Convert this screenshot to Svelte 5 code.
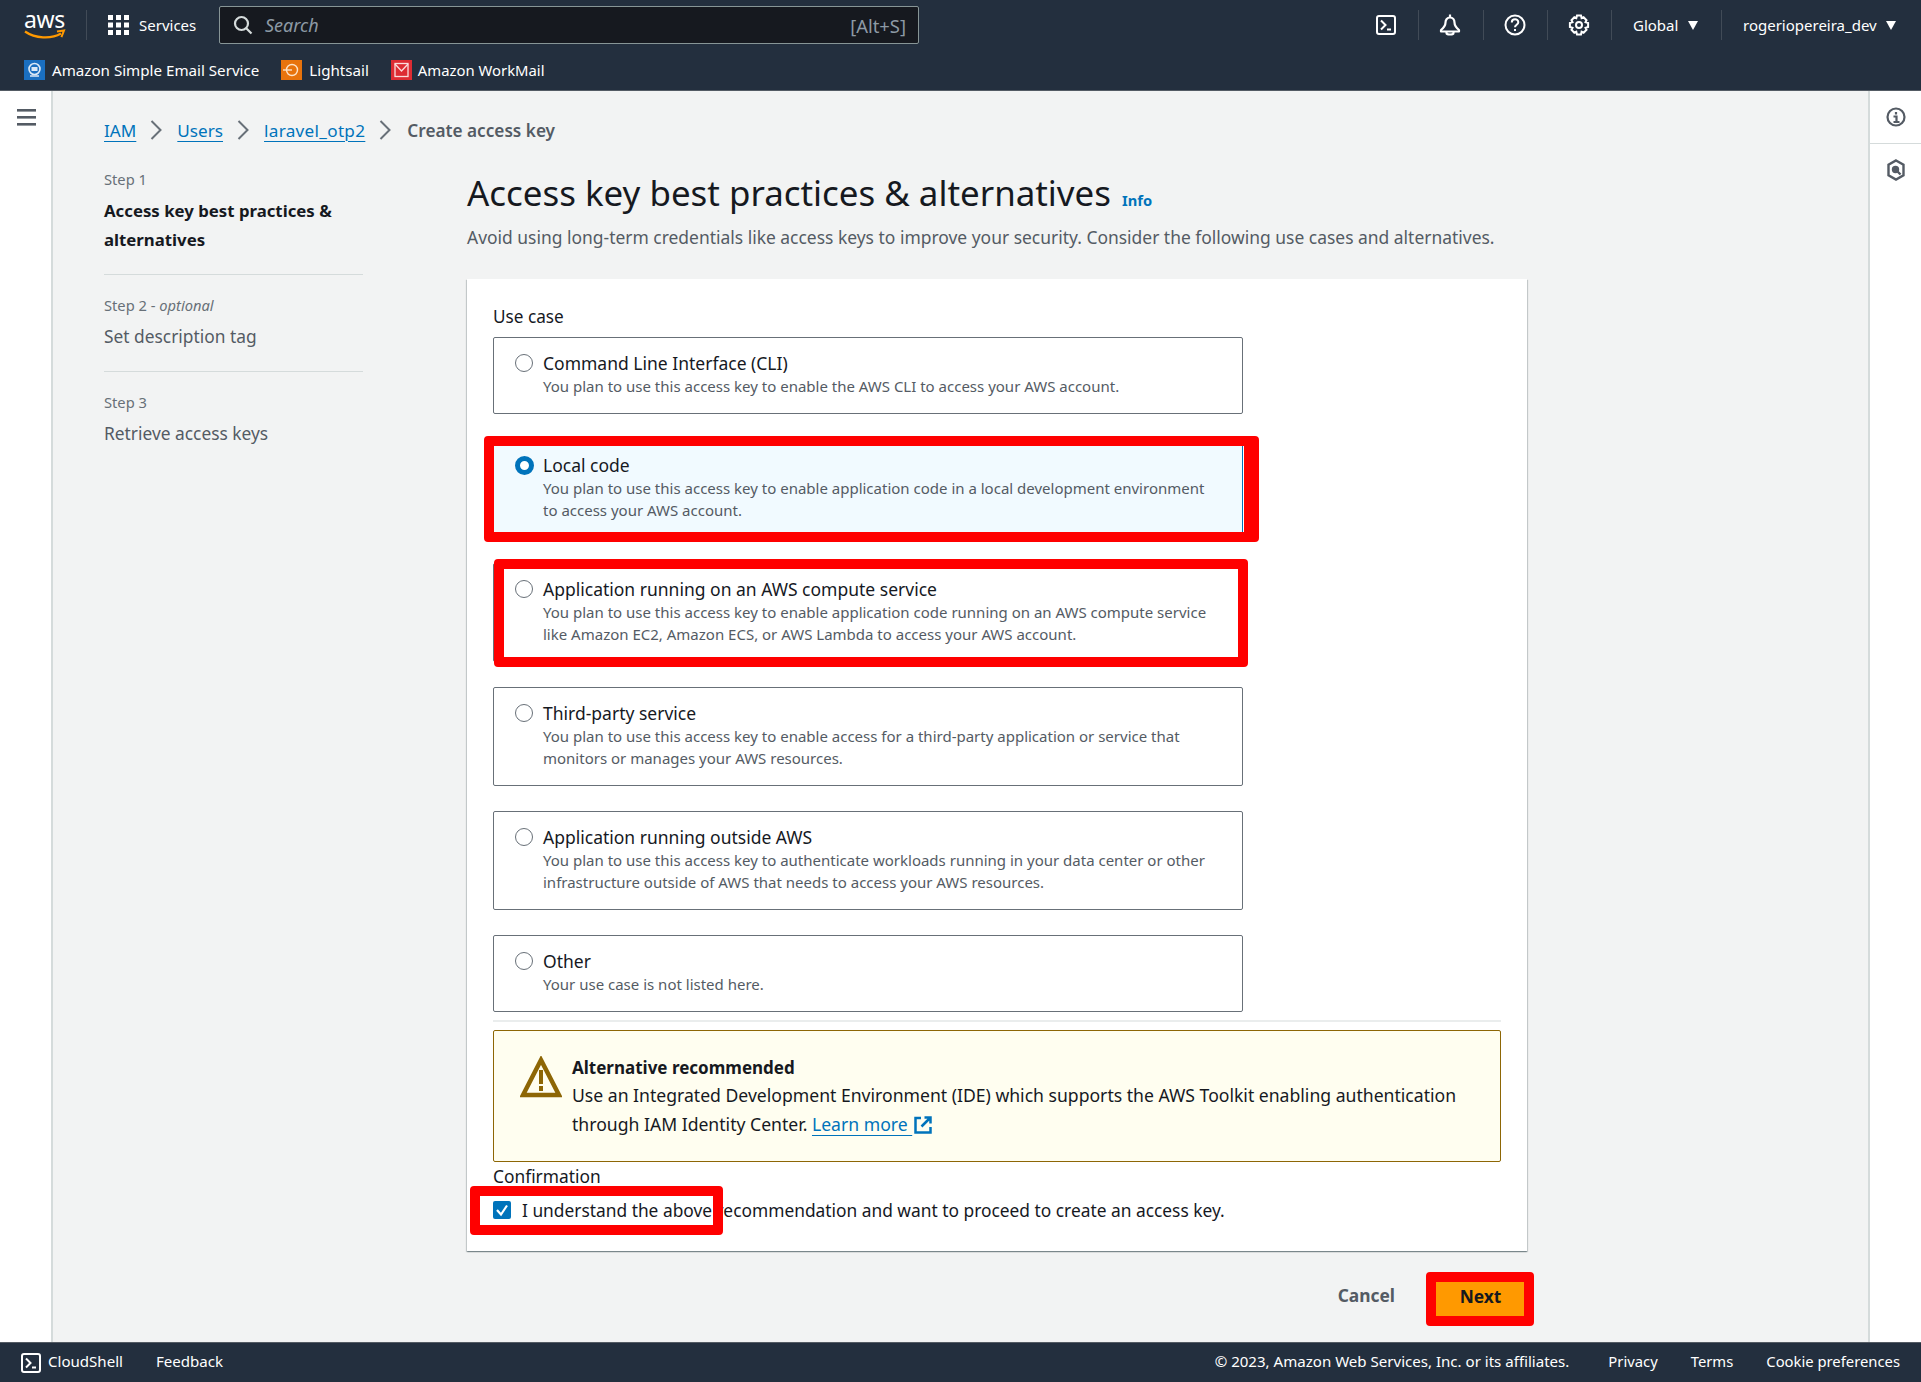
<script>
  const cards = [
    { title: 'Command Line Interface (CLI)', desc: ['You plan to use this access key to enable the AWS CLI to access your AWS account.'] },
    { title: 'Local code', desc: ['You plan to use this access key to enable application code in a local development environment', 'to access your AWS account.'], selected: true, mark: 'mark-a' },
    { title: 'Application running on an AWS compute service', desc: ['You plan to use this access key to enable application code running on an AWS compute service', 'like Amazon EC2, Amazon ECS, or AWS Lambda to access your AWS account.'], mark: 'mark-b' },
    { title: 'Third-party service', desc: ['You plan to use this access key to enable access for a third-party application or service that', 'monitors or manages your AWS resources.'] },
    { title: 'Application running outside AWS', desc: ['You plan to use this access key to authenticate workloads running in your data center or other', 'infrastructure outside of AWS that needs to access your AWS resources.'] },
    { title: 'Other', desc: ['Your use case is not listed here.'] }
  ];
</script>

<div class="page">
  <header class="top">
    <div class="row1">
      <div class="logo">
        <span class="logo-text">aws</span>
        <svg class="smile" viewBox="0 0 42 12" width="42" height="12"><path d="M1 2.500C11 9.500 27 10.500 37 4.500" fill="none" stroke="#f90" stroke-width="2.200"/><path d="M33 2.400l7-.9-2.600 6.600" fill="none" stroke="#f90" stroke-width="2"/></svg>
      </div>
      <i class="sep sep-logo"></i>
      <svg class="grid" viewBox="0 0 21 20" width="21" height="20" fill="#fff">
        <rect x="0" y="0" width="5" height="5"/><rect x="8" y="0" width="5" height="5"/><rect x="16" y="0" width="5" height="5"/>
        <rect x="0" y="7.500" width="5" height="5"/><rect x="8" y="7.500" width="5" height="5"/><rect x="16" y="7.500" width="5" height="5"/>
        <rect x="0" y="15" width="5" height="5"/><rect x="8" y="15" width="5" height="5"/><rect x="16" y="15" width="5" height="5"/>
      </svg>
      <span class="services">Services</span>
      <div class="search">
        <svg viewBox="0 0 20 20" width="20" height="20" fill="none" stroke="#d5dbdb" stroke-width="2.200"><circle cx="8.500" cy="8.500" r="6.500"/><path d="M13 13l5.500 5.500"/></svg>
        <span class="ph">Search</span>
        <span class="kbd">[Alt+S]</span>
      </div>
      <div class="tools">
        <svg class="ic ic-term" viewBox="0 0 20 20" width="20" height="20" fill="none" stroke="#fff" stroke-width="2"><rect x="1" y="1" width="18" height="18" rx="2"/><path d="M5 5.500l4.500 4.500L5 14.500M11 14.500h4"/></svg>
        <i class="sep"></i>
        <svg class="ic ic-bell" viewBox="0 0 22 22" width="22" height="22" fill="none" stroke="#fff" stroke-width="2.200"><path d="M11 .5v3"/><path d="M11 3.500c-2.800 0-4.500 2.200-4.500 5 0 3-1.500 5-4.500 7.500v1.500h18V16c-3-2.500-4.500-4.500-4.500-7.500 0-2.800-1.700-5-4.500-5z" stroke-linejoin="round"/><path d="M7.500 17.500v1.500c0 2 7 2 7 0v-1.500"/></svg>
        <i class="sep"></i>
        <svg class="ic ic-help" viewBox="0 0 22 22" width="22" height="22" fill="none" stroke="#fff" stroke-width="2"><circle cx="11" cy="11" r="9.500"/><path d="M7.800 8.500c0-4.200 6.500-4.200 6.500-.2 0 2.500-3.300 2.500-3.300 5"/><path d="M11 15v2"/></svg>
        <i class="sep"></i>
        <svg class="ic ic-gear" viewBox="0 0 22 22" width="22" height="22" fill="none" stroke="#fff" stroke-width="2"><circle cx="11" cy="11" r="3"/><path d="M9 1.500h4l.6 2.700 2-.9 2.900 2.900-1 2 2.600.8v4l-2.600.8 1 2-2.900 2.900-2-1-.6 2.800H9l-.7-2.800-2 1-2.800-2.900 1-2-2.600-.8v-4l2.600-.8-1-2 2.800-2.900 2 .9z"/></svg>
        <i class="sep"></i>
        <span class="region">Global</span><i class="caret caret-region"></i>
        <i class="sep"></i>
        <span class="user">rogeriopereira_dev</span><i class="caret"></i>
      </div>
    </div>
    <div class="row2">
      <span class="fav">
        <svg viewBox="0 0 21 20" width="21" height="20"><rect width="21" height="20" fill="#1a6fc0"/><circle cx="10.500" cy="9" r="5.500" fill="none" stroke="#dbe9f6" stroke-width="1.600"/><rect x="7.500" y="7" width="6" height="4" fill="#dbe9f6"/><path d="M6 16h9" stroke="#dbe9f6" stroke-width="1.500"/></svg>
        Amazon Simple Email Service
      </span>
      <span class="fav">
        <svg viewBox="0 0 21 20" width="21" height="20"><rect width="21" height="20" fill="#e8730c"/><circle cx="11" cy="10" r="5.500" fill="none" stroke="#fde3c8" stroke-width="1.400"/><path d="M2 10h9" stroke="#fde3c8" stroke-width="1.400"/></svg>
        Lightsail
      </span>
      <span class="fav narrow">
        <svg viewBox="0 0 21 20" width="21" height="20"><rect width="21" height="20" fill="#dd2c33"/><rect x="4" y="3.500" width="13" height="13" fill="none" stroke="#fbdcdc" stroke-width="1.300"/><path d="M4 4l6.500 7L17 4" fill="none" stroke="#fbdcdc" stroke-width="1.300"/></svg>
        Amazon WorkMail
      </span>
    </div>
  </header>

  <div class="body">
    <aside class="rail-left">
      <svg viewBox="0 0 19 17" width="19" height="17" fill="#545b64"><rect width="19" height="2.600"/><rect y="7" width="19" height="2.600"/><rect y="14" width="19" height="2.600"/></svg>
    </aside>

    <main class="main">
      <nav class="crumbs">
        <a href="#a">IAM</a>
        <svg class="chev" viewBox="0 0 12 20" width="12" height="20"><path d="M1.500 1l9 9-9 9" fill="none" stroke="#687078" stroke-width="2"/></svg>
        <a href="#a">Users</a>
        <svg class="chev" viewBox="0 0 12 20" width="12" height="20"><path d="M1.500 1l9 9-9 9" fill="none" stroke="#687078" stroke-width="2"/></svg>
        <a class="wide" href="#a">laravel_otp2</a>
        <svg class="chev" viewBox="0 0 12 20" width="12" height="20"><path d="M1.500 1l9 9-9 9" fill="none" stroke="#687078" stroke-width="2"/></svg>
        <span class="cur">Create access key</span>
      </nav>

      <div class="columns">
        <ol class="steps">
          <li>
            <div class="num">Step 1</div>
            <div class="name active">Access key best practices &amp; alternatives</div>
          </li>
          <li>
            <div class="num">Step 2 - <em>optional</em></div>
            <div class="name">Set description tag</div>
          </li>
          <li>
            <div class="num">Step 3</div>
            <div class="name">Retrieve access keys</div>
          </li>
        </ol>

        <section class="content">
          <div class="title-row">
            <h1>Access key best practices &amp; alternatives</h1>
            <a class="info" href="#a">Info</a>
          </div>
          <p class="sub">Avoid using long-term credentials like access keys to improve your security. Consider the following use cases and alternatives.</p>

          <div class="panel">
            <div class="label">Use case</div>
            <div class="cards">
              {#each cards as c}
                <div class="card" class:selected={c.selected}>
                  <span class="radio" class:on={c.selected}></span>
                  <div class="card-text">
                    <div class="card-title">{c.title}</div>
                    {#each c.desc as line}
                      <div class="card-desc">{line}</div>
                    {/each}
                  </div>
                  {#if c.mark}<span class="mark {c.mark}"></span>{/if}
                </div>
              {/each}
            </div>
            <hr class="divider" />
            <div class="alert">
              <svg class="warn" viewBox="0 0 42 42" width="42" height="42"><path d="M21 4L3 39h36z" fill="none" stroke="#8d6605" stroke-width="4.500"/><path d="M21 14v14M21 30v5" stroke="#8d6605" stroke-width="4"/></svg>
              <div>
                <div class="alert-title">Alternative recommended</div>
                <div class="alert-line">Use an Integrated Development Environment (IDE) which supports the AWS Toolkit enabling authentication</div>
                <div class="alert-line">through IAM Identity Center. <a href="#a">Learn more&nbsp;</a><svg class="ext" viewBox="0 0 18 18" width="18" height="18" fill="none" stroke="#0073bb" stroke-width="2.500"><path d="M7 2H1.500v14.500h15V11"/><path d="M10.500 1.500h6v6M16 2L7.500 10.500"/></svg></div>
              </div>
            </div>
            <div class="confirm-label">Confirmation</div>
            <div class="confirm">
              <span class="check"><svg viewBox="0 0 18 18" width="18" height="18"><path d="M4 9l4 4.500 6-9" fill="none" stroke="#fff" stroke-width="2.200"/></svg></span>
              <span>I understand the above recommendation and want to proceed to create an access key.</span>
              <span class="mark mark-c"></span>
            </div>
          </div>

          <div class="actions">
            <span class="cancel">Cancel</span>
            <span class="next">Next<span class="mark mark-d"></span></span>
          </div>
        </section>
      </div>
    </main>

    <aside class="rail-right">
      <div class="rail-cell">
        <svg viewBox="0 0 20 20" width="20" height="20" fill="none" stroke="#545b64" stroke-width="2.200"><circle cx="10" cy="10" r="8.500"/><path d="M10 5v2.500M7.500 9.500H10.500V15M7.500 15h6"/></svg>
      </div>
      <div class="rail-cell">
        <svg viewBox="0 0 20 22" width="20" height="22" fill="none" stroke="#545b64" stroke-width="2.400"><path d="M10 1.500l7.500 4.300v10.400L10 20.500l-7.500-4.300V5.800z"/><circle cx="9.500" cy="10.500" r="2.500" fill="#545b64"/><path d="M11 12l3.500 3.500"/></svg>
      </div>
    </aside>
  </div>

  <footer class="foot">
    <svg viewBox="0 0 20 20" width="20" height="20" fill="none" stroke="#fff" stroke-width="2"><rect x="1" y="1" width="18" height="18" rx="2"/><path d="M5 5.500l4.500 4.500L5 14.500M11 14.500h4"/></svg>
    <span class="cs">CloudShell</span>
    <span class="fb">Feedback</span>
    <span class="copy">© 2023, Amazon Web Services, Inc. or its affiliates.</span>
    <span class="fl privacy">Privacy</span>
    <span class="fl terms">Terms</span>
    <span class="fl cookie">Cookie preferences</span>
  </footer>
</div>

<style>
  :global(body) { margin: 0; background: #fff; }
  .page {
    width: 1921px; height: 1382px; display: flex; flex-direction: column; overflow: hidden;
    font-family: "Noto Sans", "Open Sans", sans-serif; color: #16191f; font-size: 17.35px;
  }
  i { display: block; }
  /* header */
  .top { height: 91px; box-sizing: border-box; background: #232f3e; border-bottom: 1px solid #545b64; color: #fff; flex: none; }
  .row1 { height: 50px; display: flex; align-items: center; padding-left: 24px; }
  .logo { width: 42px; height: 30px; position: relative; flex: none; }
  .logo-text { position: absolute; left: 0; top: -6px; font-size: 23px; line-height: 30px; letter-spacing: -0.4px; }
  .smile { position: absolute; left: 0; top: 19px; }
  .sep { width: 1px; height: 30px; background: #414b57; flex: none; }
  .sep-logo { margin: 0 21px 0 20px; }
  .grid { flex: none; }
  .services { margin-left: 10px; font-size: 15px; width: 60px; margin-right: 20px; white-space: nowrap; flex: none; }
  .search {
    width: 700px; height: 38px; box-sizing: border-box; background: #16191f; border: 1px solid #879596; border-radius: 2px;
    display: flex; align-items: center; padding: 0 12px 0 13px; flex: none;
  }
  .ph { margin-left: 12px; font-style: italic; color: #8d9aa5; font-size: 18px; }
  .kbd { margin-left: auto; color: #8d9aa5; font-size: 18.4px; }
  .tools { display: flex; align-items: center; margin-left: 457px; flex: none; }
  .ic { flex: none; }
  .ic-term { margin-right: 22px; }
  .ic-bell { margin: 0 22px 0 20px; }
  .ic-help { margin: 0 21px 0 20px; }
  .ic-gear { margin: 0 21px 0 20px; }
  .region { margin-left: 21px; font-size: 15px; width: 46px; white-space: nowrap; flex: none; }
  .user { margin-left: 21px; font-size: 15px; width: 134px; white-space: nowrap; flex: none; }
  .caret { width: 0; height: 0; border-left: 5.500px solid transparent; border-right: 5.500px solid transparent; border-top: 9px solid #fff; margin-left: 9px; flex: none; }
  .caret-region { margin-right: 23px; }
  .row2 { height: 39px; display: flex; align-items: center; padding-left: 24px; font-size: 15.15px; gap: 22px; }
  .fav { display: flex; align-items: center; gap: 7px; white-space: nowrap; }
  .fav.narrow { font-size: 14.85px; gap: 6px; }
  /* body */
  .body { flex: 1; display: flex; min-height: 0; }
  .rail-left { width: 53px; box-sizing: border-box; background: #fff; border-right: 2px solid #d5dbdb; padding: 18px 0 0 17px; flex: none; }
  .rail-left svg { display: block; }
  .rail-right { width: 53px; box-sizing: border-box; background: #fff; border-left: 2px solid #d5dbdb; flex: none; }
  .rail-cell { height: 52px; display: flex; align-items: center; justify-content: center; border-bottom: 1px solid #d5dbdb; padding-left: 1px; }
  .rail-cell:last-child { border-bottom: none; }
  .main { flex: 1; background: #f2f3f3; padding: 0 0 0 51px; min-width: 0; }
  /* breadcrumb */
  .crumbs { height: 26px; margin-top: 26px; display: flex; align-items: center; }
  .crumbs a { color: #0073bb; text-decoration: underline; text-underline-offset: 4px; text-decoration-thickness: 1px; white-space: nowrap; font-size: 17.15px; }
  .crumbs a.wide { letter-spacing: .3px; }
  .chev { margin: 0 15px 0 14px; flex: none; }
  .cur { color: #545b64; font-weight: 600; white-space: nowrap; font-size: 17.2px; margin-left: 1px; }
  /* columns */
  .columns { display: flex; margin-top: 20px; }
  .steps { list-style: none; margin: 5px 104px 0 0; padding: 0; width: 259px; flex: none; }
  .steps li { padding-bottom: 20px; border-bottom: 1px solid #d5dbdb; margin-bottom: 19px; }
  .steps li:last-child { border-bottom: none; }
  .num { font-size: 14.7px; line-height: 22px; color: #687078; }
  .name { line-height: 29px; margin-top: 6px; color: #545b64; }
  .name.active { color: #16191f; font-weight: 700; font-size: 16.8px; }
  .content { width: 1060px; flex: none; }
  .title-row { height: 44px; display: flex; align-items: baseline; margin-top: 8px; }
  h1 { margin: 0; font-size: 34.9px; line-height: 44px; font-weight: 400; white-space: nowrap; }
  .info { margin-left: 11px; font-size: 14.7px; font-weight: 700; color: #0073bb; text-decoration: none; }
  .sub { margin: 10px 0 0; line-height: 24px; color: #545b64; white-space: nowrap; font-size: 17.44px; }
  /* panel */
  .panel { margin-top: 30px; background: #fff; padding: 26px 26px 28px; box-sizing: border-box; height: 972px; box-shadow: 0 1px 1px rgba(0,28,36,.3), 1px 1px 1px rgba(0,28,36,.15), -1px 1px 1px rgba(0,28,36,.15); }
  .label { line-height: 24px; margin-bottom: 8px; font-size: 17.2px; }
  .cards { display: flex; flex-direction: column; gap: 25px; width: 750px; }
  .card { position: relative; display: flex; border: 1px solid #687078; border-radius: 2px; padding: 13px 15px 16px 21px; }
  .card.selected { background: #f1faff; border-color: #0073bb; }
  .radio { width: 16px; height: 16px; border: 1.500px solid #687078; border-radius: 50%; margin: 3px 10px 0 0; flex: none; background: #fff; box-sizing: content-box; }
  .radio.on { border: 5px solid #0073bb; width: 9px; height: 9px; margin-right: 9px; }
  .card-title { line-height: 24px; white-space: nowrap; font-size: 17.5px; }
  .card-desc { font-size: 15px; line-height: 22px; color: #545b64; white-space: nowrap; }
  .mark { position: absolute; border: 10px solid #f00; border-radius: 4px; pointer-events: none; }
  .mark-a { left: -10px; top: -4px; right: -17px; bottom: -5px; border-right-width: 15px; }
  .mark-b { left: 0; top: -5px; right: -6px; bottom: -6px; }
  .divider { border: none; border-top: 2px solid #eaeded; margin: 8px 0 8px; }
  .alert { height: 132px; box-sizing: border-box; border: 1px solid #8d6605; border-radius: 2px; background: #fffef0; display: flex; padding: 25px 0 0 26px; }
  .warn { margin-right: 10px; flex: none; }
  .alert-title { font-weight: 700; line-height: 24px; font-size: 17px; margin-top: 0; }
  .alert-line { line-height: 28px; margin-top: 1px; white-space: nowrap; font-size: 17.6px; }
  .alert-line a { color: #0073bb; text-decoration: underline; text-underline-offset: 4px; text-decoration-thickness: 1px; }
  .ext { vertical-align: -3px; margin-left: 2px; }
  .confirm-label { line-height: 24px; margin-top: 2px; }
  .confirm { position: relative; line-height: 24px; margin-top: 10px; display: flex; align-items: center; white-space: nowrap; }
  .check { width: 18px; height: 18px; background: #0073bb; border-radius: 2px; margin-right: 11px; flex: none; display: block; }
  .check svg { display: block; }
  .mark-c { left: -23px; top: -12px; width: 253px; height: 49px; box-sizing: border-box; }
  /* actions */
  .actions { margin-top: 26px; display: flex; justify-content: flex-end; align-items: flex-start; }
  .cancel { color: #545b64; font-weight: 700; margin-right: 39px; line-height: 37px; }
  .next { position: relative; width: 93px; height: 41px; padding-bottom: 4px; background: #f90; display: flex; align-items: center; justify-content: center; font-weight: 700; box-sizing: border-box; }
  .mark-d { left: -8px; top: -5px; right: -7px; bottom: -8px; }
  /* footer */
  .foot { height: 40px; box-sizing: border-box; flex: none; background: #232f3e; border-top: 1px solid #545b64; color: #fff; font-size: 15.07px; display: flex; align-items: center; padding: 0 0 4px 21px; }
  .foot span { white-space: nowrap; }
  .foot svg { flex: none; margin-top: 4px; }
  .cs { margin-left: 7px; }
  .fb { margin-left: 33px; }
  .copy { margin-left: auto; }
  .fl { margin-left: 33px; font-size: 14.8px; }
  .privacy { margin-left: 39px; }
  .cookie { margin-right: 21px; }
</style>
